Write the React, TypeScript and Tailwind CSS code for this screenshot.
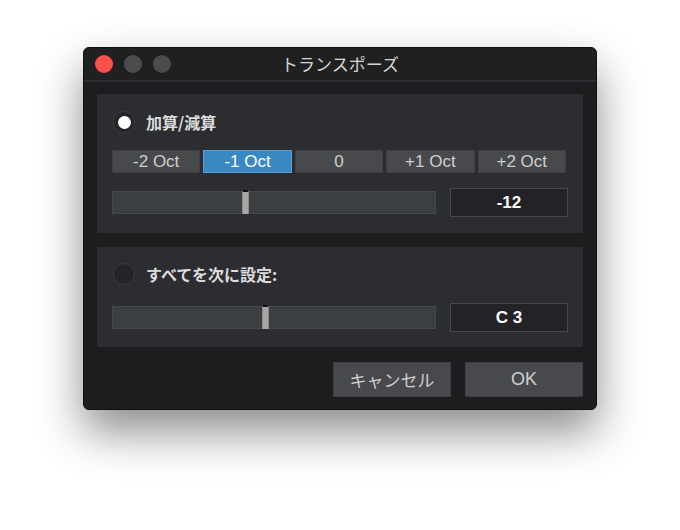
import { useState } from "react";

const jp = { fontFamily: '"Noto Sans CJK JP", "Liberation Sans", sans-serif' };
const latin = { fontFamily: '"Liberation Sans", "Noto Sans CJK JP", sans-serif' };

const octs = ["-2 Oct", "-1 Oct", "0", "+1 Oct", "+2 Oct"];

function Radio({ on }: { on: boolean }) {
  return (
    <span className="w-[22px] h-[22px] rounded-full bg-[#232427] border border-[#3b3c3f] flex items-center justify-center shrink-0">
      {on && <span className="w-[13px] h-[13px] rounded-full bg-white" />}
    </span>
  );
}

function Slider({ pos }: { pos: number }) {
  return (
    <div className="relative w-[324px] h-[23px] bg-[#3c3f42] border border-[#474a4d]">
      <div
        className="absolute top-[-2px] bottom-[-1px] w-[7px] bg-[#a7a7a7] border-x border-[#8a8a8a] border-t-2 border-t-[#111]"
        style={{ left: pos }}
      />
    </div>
  );
}

function ValueBox({ value }: { value: string }) {
  return (
    <div
      className="w-[118px] h-[29px] bg-[#222326] border border-[#45474a] flex items-center justify-center text-white text-[17px] font-bold"
      style={latin}
    >
      {value}
    </div>
  );
}

export default function App() {
  const [oct, setOct] = useState(1);
  return (
    <div className="w-[680px] h-[530px] bg-white pt-[47px] pl-[83px]">
      <div className="w-[514px] h-[363px] rounded-[6px] bg-[#1c1d1f] border border-[#101012] shadow-[0_22px_45px_rgba(0,0,0,0.45)] flex flex-col overflow-hidden">
        <div className="relative h-[34px] bg-[#1f2022] border-b-2 border-[#2d2e31] flex items-center justify-center shrink-0">
          <div className="absolute left-[11px] top-[7px] flex gap-[11px]">
            <span className="w-[18px] h-[18px] rounded-full bg-[#fb4f4b]" />
            <span className="w-[18px] h-[18px] rounded-full bg-[#4b4c4e]" />
            <span className="w-[18px] h-[18px] rounded-full bg-[#4b4c4e]" />
          </div>
          <span className="text-[17px] text-[#d6d6d6]" style={jp}>トランスポーズ</span>
        </div>

        <div className="px-[13px] pt-[12px] flex flex-col">
          <div className="h-[139px] bg-[#2c2d30] pl-[15px] pr-[15px] pt-[17px] flex flex-col">
            <div className="flex items-center gap-[11px] pl-[1px] h-[22px]">
              <Radio on />
              <span className="text-[16px] font-bold text-[#dcdcdc]" style={jp}>加算/減算</span>
            </div>
            <div className="mt-[17px] w-[454px] grid grid-cols-5 gap-[3px]">
              {octs.map((o, i) => (
                <button
                  key={o}
                  onClick={() => setOct(i)}
                  className={
                    i === oct
                      ? "h-[23px] bg-[#3a88c3] border border-[#5b9fd3] text-white text-[17px] leading-none flex items-center justify-center"
                      : "h-[23px] bg-[#48494c] border border-[#3e3f42] text-[#cfcfcf] text-[17px] leading-none flex items-center justify-center"
                  }
                  style={latin}
                >
                  {o}
                </button>
              ))}
            </div>
            <div className="mt-[15px] flex items-center justify-between">
              <Slider pos={129} />
              <ValueBox value="-12" />
            </div>
          </div>

          <div className="mt-[14px] h-[100px] bg-[#2c2d30] pl-[15px] pr-[15px] pt-[16px] flex flex-col">
            <div className="flex items-center gap-[11px] pl-[1px] h-[22px]">
              <Radio on={false} />
              <span className="text-[16px] font-bold text-[#dcdcdc]" style={jp}>すべてを次に設定:</span>
            </div>
            <div className="mt-[18px] flex items-center justify-between">
              <Slider pos={149} />
              <ValueBox value="C 3" />
            </div>
          </div>

          <div className="mt-[15px] flex justify-end gap-[14px]">
            <button
              className="w-[118px] h-[35px] bg-[#48494c] border border-[#3e3f42] text-[#cfcfcf] text-[17px]"
              style={jp}
            >
              キャンセル
            </button>
            <button
              className="w-[118px] h-[35px] bg-[#48494c] border border-[#3e3f42] text-[#cfcfcf] text-[18px]"
              style={latin}
            >
              OK
            </button>
          </div>
        </div>
      </div>
    </div>
  );
}
